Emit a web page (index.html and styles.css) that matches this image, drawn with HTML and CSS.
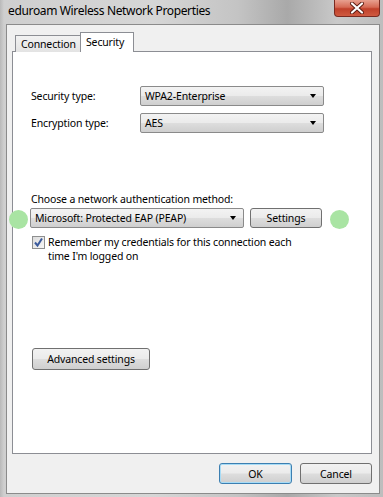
FILE: index.html
```html
<!DOCTYPE html>
<html>
<head>
<meta charset="utf-8">
<link rel="stylesheet" href="styles.css">
</head>
<body>
<div class="window">
  <div class="titlebar">
    <div class="title">eduroam Wireless Network Properties</div>
    <div class="close"><svg width="16" height="12" viewBox="0 0 16 12"><path d="M3 1.5 L13 10.5 M13 1.5 L3 10.5" stroke="#5a1a10" stroke-width="4" stroke-linecap="round"/><path d="M3 1.5 L13 10.5 M13 1.5 L3 10.5" stroke="#ffffff" stroke-width="2.2" stroke-linecap="round"/></svg></div>
  </div>
  <div class="client">
    <div class="tabs">
      <div class="tab">Connection</div>
      <div class="tab active">Security</div>
    </div>
    <div class="panel">
      <div class="row first">
        <span class="label">Security type:</span>
        <div class="combo wide"><span>WPA2-Enterprise</span><i class="arrow"></i></div>
      </div>
      <div class="row second">
        <span class="label">Encryption type:</span>
        <div class="combo wide"><span>AES</span><i class="arrow"></i></div>
      </div>
      <div class="choose">Choose a network authentication method:</div>
      <div class="authrow">
        <div class="combo auth"><span>Microsoft: Protected EAP (PEAP)</span><i class="arrow"></i></div>
        <div class="btn settings">Settings</div>
      </div>
      <div class="checkrow">
        <div class="checkbox"><svg width="11" height="11" viewBox="0 0 11 11"><path d="M2 5.5 L4.5 8.5 L9 1.5" fill="none" stroke="#3a5a9c" stroke-width="2"/></svg></div>
        <div class="checktext">Remember my credentials for this connection each<br>time I'm logged on</div>
      </div>
      <div class="btn advanced">Advanced settings</div>
      <div class="dot dot-left"></div>
      <div class="dot dot-right"></div>
    </div>
    <div class="footer">
      <div class="btn ok">OK</div>
      <div class="btn cancel">Cancel</div>
    </div>
  </div>
</div>
</body>
</html>
```
FILE: styles.css
```css
html, body {
  margin: 0;
  padding: 0;
}
body {
  width: 383px;
  height: 497px;
  overflow: hidden;
  font-family: "Noto Sans", "DejaVu Sans", sans-serif;
  font-size: 10.5px;
  letter-spacing: -0.15px;
  color: #000;
  background: linear-gradient(to right, #b9b9b9 0px, #cfcfcf 4px, #d6d6d6 40%, #c4c4c4 62%, #a9a9a9 75%, #c9c9c9 88%, #bdbdbd 100%);
}
.window {
  display: flex;
  flex-direction: column;
  height: 497px;
}
.titlebar {
  height: 24px;
  display: flex;
  align-items: flex-start;
  flex: none;
}
.title {
  padding-left: 8px;
  padding-top: 3px;
  font-size: 12px;
  letter-spacing: -0.35px;
  line-height: 16px;
  color: #000;
}
.close {
  margin-left: auto;
  margin-right: 3px;
  width: 46px;
  height: 17px;
  box-sizing: border-box;
  border: 1px solid #7a2a20;
  border-top: none;
  border-radius: 0 0 4px 4px;
  background: linear-gradient(to bottom, #e8a090 0%, #d66a55 45%, #c0402a 55%, #cf5a40 100%);
  display: flex;
  align-items: center;
  justify-content: center;
}
.client {
  flex: 1;
  margin: 0 3px 3px 6px;
  border: 1px solid #8b8b8b;
  background: #f0f0f0;
  padding: 8px 7px 0 5px;
  display: flex;
  flex-direction: column;
}
.tabs {
  display: flex;
  align-items: flex-end;
  padding-left: 3px;
  height: 19px;
  position: relative;
  z-index: 1;
  margin-bottom: -1px;
}
.tab {
  height: 17px;
  box-sizing: border-box;
  border: 1px solid #8c8e94;
  border-bottom: none;
  background: linear-gradient(to bottom, #f2f2f2, #e3e3e3);
  padding: 0 0 0 5px;
  line-height: 16px;
  width: 66px;
  white-space: nowrap;
}
.tab.active {
  height: 20px;
  width: 54px;
  background: #fff;
  line-height: 18px;
  padding: 0 0 0 5px;
  margin-left: -1px;
}
.panel {
  position: relative;
  height: 403px;
  box-sizing: border-box;
  border: 1px solid #8c8e94;
  background: #fff;
  padding-left: 17px;
  display: flex;
  flex-direction: column;
  align-items: flex-start;
}
.row {
  display: flex;
  align-items: center;
  height: 20px;
}
.row.first { margin-top: 34px; }
.row.second { margin-top: 7px; }
.label {
  width: 109px;
  padding-left: 1px;
}
.combo {
  height: 20px;
  box-sizing: border-box;
  border: 1px solid #8a8a8a;
  border-radius: 2px;
  background: linear-gradient(to bottom, #f3f3f3 0%, #ebebeb 48%, #dddddd 52%, #cfcfcf 100%);
  display: flex;
  align-items: center;
  padding-left: 4px;
  position: relative;
}
.combo.wide { width: 184px; }
.combo.auth { width: 214px; }
.arrow {
  position: absolute;
  right: 7px;
  top: 7px;
  width: 0;
  height: 0;
  border-left: 3.5px solid transparent;
  border-right: 3.5px solid transparent;
  border-top: 4px solid #000;
}
.choose {
  margin-top: 58px;
  line-height: 16px;
  padding-left: 1px;
}
.authrow {
  display: flex;
  margin-top: 1px;
  gap: 6px;
}
.btn {
  box-sizing: border-box;
  border: 1px solid #707070;
  border-radius: 3px;
  background: linear-gradient(to bottom, #f2f2f2 0%, #ebebeb 48%, #dddddd 52%, #cfcfcf 100%);
  display: flex;
  align-items: center;
  justify-content: center;
}
.btn.settings {
  width: 72px;
  height: 20px;
}
.checkrow {
  display: flex;
  margin-top: 7px;
  margin-left: 2px;
}
.checkbox {
  width: 13px;
  height: 13px;
  box-sizing: border-box;
  border: 1px solid #8e8f8f;
  background: linear-gradient(to bottom right, #dcdcdc, #f6f6f6);
  margin-top: 1px;
  display: flex;
  align-items: center;
  justify-content: center;
}
.checktext {
  margin-left: 3px;
  line-height: 14px;
}
.btn.advanced {
  margin-top: 85px;
  margin-left: 2px;
  width: 118px;
  height: 22px;
}
.dot {
  position: absolute;
  width: 19px;
  height: 19px;
  border-radius: 50%;
  background: #a9e4a3;
  top: 158px;
}
.dot-left { left: -4px; }
.dot-right { left: 317px; }
.footer {
  display: flex;
  justify-content: flex-end;
  gap: 8px;
  margin-top: 9px;
}
.btn.ok {
  width: 73px;
  height: 21px;
  border-color: #3c7fb1;
  box-shadow: inset 0 0 0 1px #a8dcf6;
}
.btn.cancel {
  width: 72px;
  height: 21px;
}
```
